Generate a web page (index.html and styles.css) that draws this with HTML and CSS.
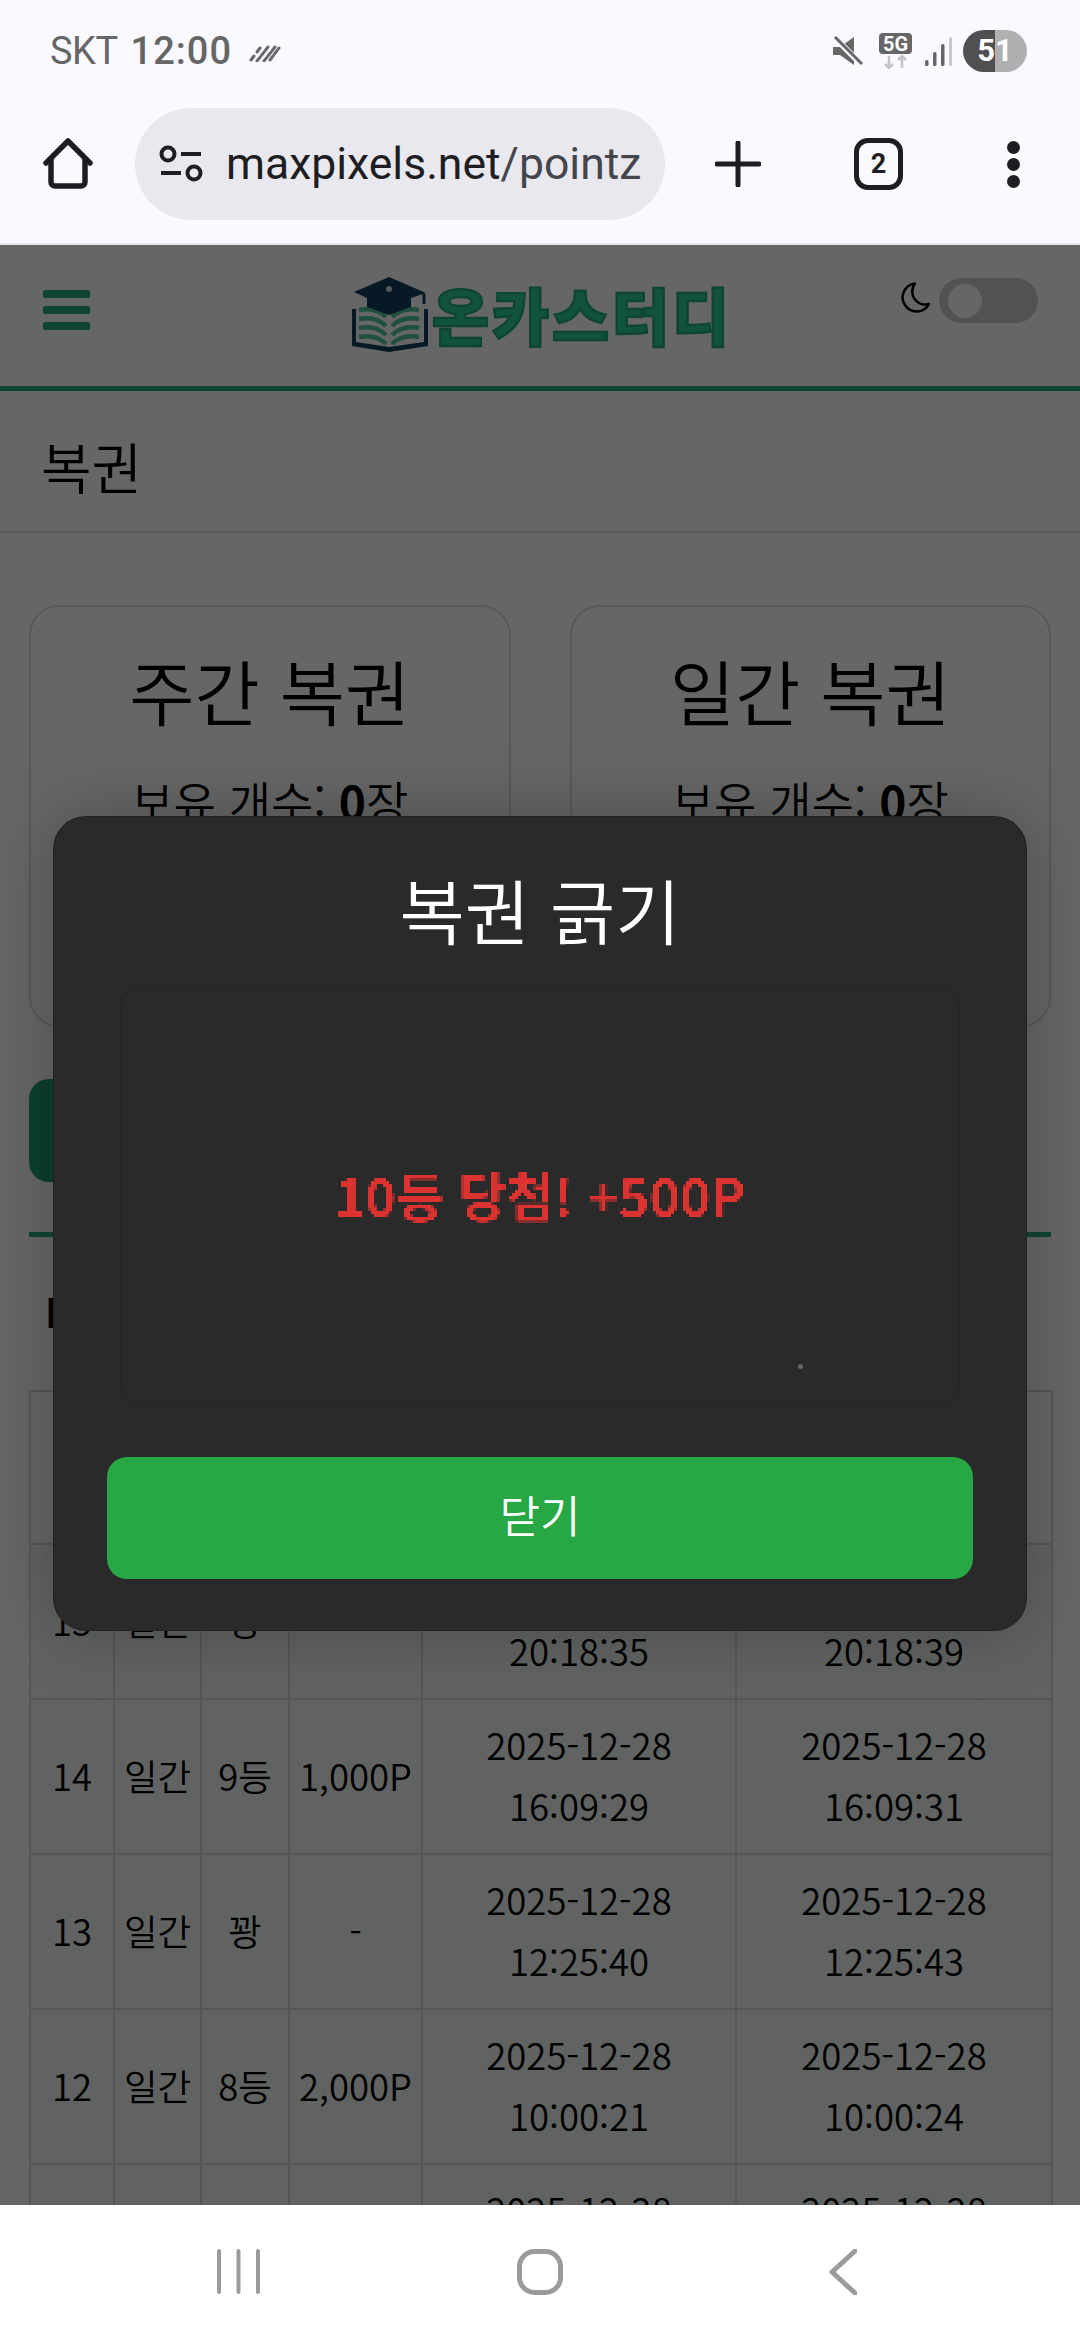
FILE: index.html
```html
<!DOCTYPE html>
<html lang="ko">
<head>
<meta charset="utf-8">
<title>복권</title>
<link rel="stylesheet" href="styles.css">
</head>
<body>
<svg class="defs" width="0" height="0" aria-hidden="true">
  <filter id="pixelate" x="0" y="0" width="100%" height="100%" color-interpolation-filters="sRGB">
    <feFlood x="1" y="1" width="1" height="1" flood-color="#000"/>
    <feComposite width="3" height="3"/>
    <feTile result="grid"/>
    <feComposite in="SourceGraphic" in2="grid" operator="in"/>
    <feMorphology operator="dilate" radius="1"/>
    <feGaussianBlur stdDeviation="0.5"/>
  </filter>
</svg>
<div class="screen">
  <div class="status">
    <span class="carrier">SKT</span>
    <span class="clock">12:00</span>
    <svg class="stripes" viewBox="0 0 32 18" fill="none" stroke="#6a6a6c" stroke-width="3" stroke-linecap="round">
      <path d="M2 16l3-4M8 8l3-4M8 17l11-14M15 17l11-14M21 16l9-12" stroke-dasharray="5 2"/>
    </svg>
    <div class="status-icons">
      <svg class="ic-mute" viewBox="0 0 30 30">
        <path d="M0 11h7L21 1v28L7 19H0z" fill="#666"/>
        <path d="M0 0L29 29" stroke="#f9f9ff" stroke-width="6"/>
        <path d="M2 1L29 28" stroke="#666" stroke-width="3"/>
      </svg>
      <svg class="ic-5g" viewBox="0 0 33 36">
        <rect width="33" height="21" rx="4" fill="#666"/>
        <text class="ic-5g-text" x="16.500" y="17.500" text-anchor="middle">5G</text>
        <path d="M10 23v12M6 31l4 4 4-4" fill="none" stroke="#c4c4c8" stroke-width="2.500"/>
        <path d="M23 35V23M19 27l4-4 4 4" fill="none" stroke="#c4c4c8" stroke-width="2.500"/>
      </svg>
      <svg class="ic-signal" viewBox="0 0 27 29">
        <rect x="0" y="23" width="3.500" height="6" rx="1.500" fill="#666"/>
        <rect x="8" y="15" width="3.500" height="14" rx="1.500" fill="#666"/>
        <rect x="16" y="7" width="3.500" height="22" rx="1.500" fill="#666"/>
        <rect x="24" y="0" width="3" height="29" rx="1.500" fill="#c8c8cc"/>
      </svg>
      <div class="battery">51</div>
    </div>
  </div>

  <div class="toolbar">
    <svg class="ic-home" viewBox="0 0 50 52" fill="none" stroke="#1d1d22" stroke-width="5.500" stroke-linecap="round" stroke-linejoin="round">
      <path d="M3 25L25 3l22 22"/>
      <path d="M8 22v22a4 4 0 0 0 4 4h26a4 4 0 0 0 4-4V22"/>
    </svg>
    <div class="url-pill">
      <svg class="ic-tune" viewBox="0 0 44 38" fill="none" stroke="#1d1d22" stroke-width="4">
        <circle cx="9" cy="9" r="6.500"/>
        <path d="M22 9h20M2 28h20"/>
        <circle cx="35" cy="28" r="6.500"/>
      </svg>
      <span class="url">maxpixels.net<span class="url-tail">/pointz</span></span>
    </div>
    <svg class="ic-plus" viewBox="0 0 46 46" stroke="#1d1d22" stroke-width="5" stroke-linecap="round">
      <path d="M23 2v42M2 23h42"/>
    </svg>
    <div class="tabs">2</div>
    <div class="dots"><i class="dot"></i><i class="dot"></i><i class="dot"></i></div>
  </div>

  <div class="page">
    <header class="site-head">
      <div class="burger"><i class="bar"></i><i class="bar"></i><i class="bar"></i></div>
      <div class="logo">
        <svg class="logo-mark" viewBox="0 0 80 75">
          <path d="M3 32v37l37 6 39-6V32l-4 0v33l-35 5-33-5V32z" fill="#123f5c"/>
          <g fill="none" stroke="#4fc89c" stroke-width="4.500">
            <path d="M10 33c10-2 20 0 27 7"/>
            <path d="M10 42c10-2 20 0 27 7"/>
            <path d="M10 51c10-2 20 0 27 7"/>
            <path d="M10 60c10-2 20 0 27 7"/>
            <path d="M70 33c-10-2-20 0-27 7"/>
            <path d="M70 42c-10-2-20 0-27 7"/>
            <path d="M70 51c-10-2-20 0-27 7"/>
            <path d="M70 60c-10-2-20 0-27 7"/>
          </g>
          <path d="M40 0L5 15l13 6v9l22 8 22-8v-9l15-5z" fill="#123f5c"/>
          <circle cx="40" cy="12" r="3" fill="#e0e0e0"/>
          <path d="M75 17v10" stroke="#123f5c" stroke-width="3"/>
        </svg>
        <span class="logo-text">온카스터디</span>
      </div>
      <div class="theme">
        <svg class="ic-moon" viewBox="0 0 30 31" fill="none" stroke="#000" stroke-width="2.500" stroke-linejoin="round">
          <path d="M15 1.500A14 14 0 1 0 29 22 13 13 0 0 1 15 1.500z"/>
        </svg>
        <div class="switch"><i class="knob"></i></div>
      </div>
    </header>

    <div class="title-bar">복권</div>

    <main class="content">
      <section class="cards">
        <article class="card">
          <h2 class="card-title">주간 복권</h2>
          <p class="card-count">보유 개수: <b>0</b>장</p>
        </article>
        <article class="card">
          <h2 class="card-title">일간 복권</h2>
          <p class="card-count">보유 개수: <b>0</b>장</p>
        </article>
      </section>
      <div class="big-btn"></div>
      <div class="rule"></div>
      <div class="history-label">N</div>
      <table class="history">
        <colgroup>
          <col class="c1"><col class="c2"><col class="c3"><col class="c4"><col class="c5"><col class="c6">
        </colgroup>
        <thead>
          <tr><th>ID</th><th></th><th></th><th></th><th></th><th></th></tr>
        </thead>
        <tbody>
          <tr><td>15</td><td>일간</td><td>꽝</td><td>-</td><td>2025-12-28<br>20:18:35</td><td>2025-12-28<br>20:18:39</td></tr>
          <tr><td>14</td><td>일간</td><td>9등</td><td>1,000P</td><td>2025-12-28<br>16:09:29</td><td>2025-12-28<br>16:09:31</td></tr>
          <tr><td>13</td><td>일간</td><td>꽝</td><td>-</td><td>2025-12-28<br>12:25:40</td><td>2025-12-28<br>12:25:43</td></tr>
          <tr><td>12</td><td>일간</td><td>8등</td><td>2,000P</td><td>2025-12-28<br>10:00:21</td><td>2025-12-28<br>10:00:24</td></tr>
          <tr><td>11</td><td>일간</td><td>꽝</td><td>-</td><td>2025-12-28<br>09:00:00</td><td>2025-12-28<br>09:00:00</td></tr>
        </tbody>
      </table>
    </main>

    <div class="overlay">
      <div class="modal">
        <h2 class="modal-title">복권 긁기</h2>
        <div class="scratch">
          <span class="prize">10등 당첨! +500P</span>
          <i class="speck"></i>
        </div>
        <div class="close-btn">닫기</div>
      </div>
    </div>
  </div>

  <nav class="navbar">
    <svg class="ic-recents" viewBox="0 0 43 45" stroke="#9b9b9b" stroke-width="4" stroke-linecap="round">
      <path d="M2 2v41M21.500 2v41M41 2v41"/>
    </svg>
    <svg class="ic-circle" viewBox="0 0 46 46" fill="none" stroke="#9b9b9b" stroke-width="5">
      <rect x="2.500" y="2.500" width="41" height="41" rx="15"/>
    </svg>
    <svg class="ic-back" viewBox="0 0 28 46" fill="none" stroke="#9b9b9b" stroke-width="5" stroke-linecap="round" stroke-linejoin="round">
      <path d="M26 2L3 23l23 21"/>
    </svg>
  </nav>
</div>
</body>
</html>
```
FILE: styles.css
```css
* { box-sizing: border-box; }
html, body { margin: 0; padding: 0; }
body {
  width: 1080px;
  height: 2340px;
  overflow: hidden;
  font-family: "Noto Sans CJK KR", "Noto Sans", sans-serif;
  font-weight: 350;
  background: #fff;
}
.defs { position: absolute; }
.screen { width: 1080px; height: 2340px; display: flex; flex-direction: column; }

/* status bar */
.status {
  height: 102px;
  flex: none;
  background: #f9f9ff;
  display: flex;
  align-items: center;
  padding: 0 53px 0 50px;
  font-family: Roboto, sans-serif;
  font-weight: 400;
  color: #666;
}
.carrier { font-size: 38px; letter-spacing: -.5px; }
.clock { font-size: 38px; font-weight: 500; margin-left: 13px; letter-spacing: 1px; }
.stripes { width: 32px; height: 18px; margin: 4px 0 0 17px; }
.status-icons { margin-left: auto; display: flex; align-items: center; }
.ic-mute { width: 30px; height: 30px; }
.ic-5g { width: 33px; height: 36px; margin-left: 16px; }
.ic-5g-text { font: 700 20px Roboto, sans-serif; fill: #fff; }
.ic-signal { width: 27px; height: 29px; margin-left: 13px; }
.battery {
  width: 64px;
  height: 42px;
  margin-left: 11px;
  border-radius: 21px;
  background: linear-gradient(90deg, #505052 50%, #b0afb2 50%);
  color: #fff;
  font-size: 31px;
  font-weight: 700;
  line-height: 42px;
  text-align: center;
}

/* browser toolbar */
.toolbar {
  height: 143px;
  flex: none;
  background: #f9f9ff;
  border-bottom: 2px solid #e6e6ea;
  display: flex;
  align-items: flex-start;
  padding: 6px 0 0 43px;
}
.ic-home { width: 50px; height: 52px; margin-top: 30px; }
.url-pill {
  width: 530px;
  height: 112px;
  margin-left: 42px;
  background: #e8e8ee;
  border-radius: 56px;
  display: flex;
  align-items: center;
  padding-left: 24px;
}
.ic-tune { width: 44px; height: 38px; flex: none; }
.url {
  margin-left: 23px;
  font-family: Roboto, sans-serif;
  font-weight: 400;
  font-size: 44.500px;
  color: #1d1d22;
  white-space: nowrap;
}
.url-tail { color: #45454d; }
.ic-plus { width: 46px; height: 46px; margin: 33px 0 0 50px; }
.tabs {
  width: 49px;
  height: 52px;
  margin: 30px 0 0 93px;
  border: 5px solid #1d1d22;
  border-radius: 14px;
  font: 700 27px/42px Roboto, sans-serif;
  color: #1d1d22;
  text-align: center;
}
.dots { margin: 33px 0 0 104px; display: flex; flex-direction: column; gap: 4px; }
.dot { width: 13px; height: 13px; border-radius: 50%; background: #1d1d22; }

/* page below the chrome */
.page { position: relative; flex: 1; overflow: hidden; background: #fff; color: #000; }
.site-head {
  height: 146px;
  border-bottom: 5px solid #23ac82;
  display: grid;
  grid-template-columns: 1fr auto 1fr;
  padding: 0 42px 0 43px;
}
.burger { display: flex; flex-direction: column; gap: 8px; margin-top: 45px; }
.bar { width: 47px; height: 8px; border-radius: 2px; background: #23ac82; }
.logo { display: flex; align-items: center; gap: 3px; margin-top: 32px; height: 75px; }
.logo-mark { width: 80px; height: 75px; filter: blur(.5px); }
.logo-text {
  font-size: 62px;
  font-weight: 900;
  line-height: 75px;
  color: #2fd096;
  -webkit-text-stroke: 2.500px #23ac82;
  letter-spacing: 3px;
  filter: blur(.6px);
  white-space: nowrap;
}
.theme { display: flex; align-items: center; justify-content: flex-end; gap: 9px; margin-top: 33px; height: 45px; }
.ic-moon { width: 30px; height: 31px; margin-top: -6px; }
.switch {
  width: 99px;
  height: 45px;
  border-radius: 23px;
  background: #ccc;
  padding: 6px 0 0 9px;
}
.knob { display: block; width: 34px; height: 34px; border-radius: 50%; background: #fff; }

.title-bar {
  height: 142px;
  padding: 34px 0 0 41px;
  border-bottom: 2px solid #e2e2e2;
  font-size: 55px;
  line-height: 80px;
}
.content { padding: 72px 29px 0 29px; }
.cards { display: grid; grid-template-columns: 1fr 1fr; gap: 59px; }
.card {
  height: 422px;
  border: 2px solid #dcdcdc;
  border-radius: 30px;
  padding-top: 32px;
  text-align: center;
}
.card-title { margin: 0; font-size: 71px; font-weight: 350; line-height: 100px; }
.card-count { margin: 29px 0 0; font-size: 46px; line-height: 64px; }
.big-btn { width: 600px; height: 103px; margin-top: 52px; border-radius: 20px; background: #1ea078; }
.rule { height: 5px; margin-top: 50px; background: #23ac82; }
.history-label { height: 153px; padding-top: 42px; padding-left: 16px; font-size: 40px; font-weight: 700; line-height: 64px; }
.history {
  width: 1022px;
  table-layout: fixed;
  border-collapse: collapse;
  font-size: 36.500px;
  line-height: 61px;
  text-align: center;
}
.c1 { width: 84px; }
.c2 { width: 87px; }
.c3 { width: 88px; }
.c4 { width: 133px; }
.c5 { width: 314px; }
.c6 { width: 316px; }
.history th, .history td { border: 2px solid #d8d8d8; padding: 14px 0 17px; font-weight: 350; }
.history thead th { height: 153px; }
.history tbody td { background: #f0f7f4; }

/* modal */
.overlay {
  position: absolute;
  inset: 0;
  background: rgba(0, 0, 0, .6);
  display: flex;
  align-items: center;
  justify-content: center;
  padding-bottom: 3px;
}
.modal {
  width: 972px;
  height: 813px;
  padding: 41px 53px 0;
  border-radius: 32px;
  background: #2a2a2a;
  box-shadow: 0 0 0 1px #232323, 0 0 70px rgba(0, 0, 0, .25);
  color: #fff;
  text-align: center;
}
.modal-title { margin: 0; font-size: 71px; font-weight: 350; line-height: 100px; }
.scratch {
  position: relative;
  height: 419px;
  margin: 27px 13px 0;
  border: 2px solid #272727;
  border-radius: 22px;
  display: flex;
  align-items: center;
  justify-content: center;
}
.prize {
  font-size: 52px;
  font-weight: 700;
  color: #dc3330;
  filter: url(#pixelate);
  white-space: nowrap;
}
.speck { position: absolute; left: 676px; top: 377px; width: 5px; height: 5px; border-radius: 50%; background: #666; }
.close-btn {
  height: 122px;
  margin-top: 53px;
  border-radius: 20px;
  background: #28a745;
  font-size: 44px;
  line-height: 114px;
}

/* android nav */
.navbar {
  height: 135px;
  flex: none;
  background: #fff;
  display: grid;
  grid-template-columns: repeat(3, 1fr);
  padding: 44px 85px 0;
  justify-items: center;
  align-items: start;
}
.ic-recents { width: 43px; height: 45px; margin-left: 3px; }
.ic-circle { width: 46px; height: 46px; }
.ic-back { width: 28px; height: 46px; }
```
